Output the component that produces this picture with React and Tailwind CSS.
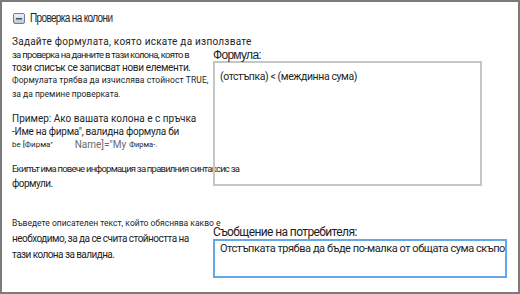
export default function App() {
  const f = { fontFamily: 'Roboto, "Noto Sans", sans-serif' };
  const t = { fontFamily: '"Liberation Sans", Arial, sans-serif' };
  return (
    <div className="w-[520px] h-[294px] bg-white border-2 border-[#7b7b7b] text-[#1e1e1e] overflow-hidden" style={f}>
      <div className="flex items-center h-[31px] pl-[11px] pt-[1px]">
        <svg width="12" height="11" viewBox="0 0 12 11" className="mr-[5px] shrink-0">
          <defs>
            <linearGradient id="g" x1="0" y1="0" x2="0" y2="1">
              <stop offset="0" stopColor="#f4f6fa" />
              <stop offset="1" stopColor="#b9c3d3" />
            </linearGradient>
          </defs>
          <rect x="0.5" y="0.5" width="11" height="10" rx="1.5" fill="url(#g)" stroke="#6f7f97" />
          <rect x="3" y="5" width="6" height="1.5" fill="#3c4d66" />
        </svg>
        <span className="inline-block origin-left scale-x-[0.8] text-[12.5px] leading-none tracking-[-0.8px] whitespace-nowrap" style={t}>Проверка на колони</span>
      </div>
      <div className="flex h-[181px]">
        <div className="w-[211px] pl-[10px] pt-[2px] text-[10px] whitespace-nowrap">
          <div className="h-[13px] leading-[13px] tracking-[0.25px]">Задайте формулата, която искате да използвате</div>
          <div className="h-[13px] leading-[13px] text-[9.5px] tracking-[-0.7px]">за проверка на данните в тази колона, която в</div>
          <div className="h-[13px] leading-[13px] tracking-[-0.35px]">този списък се записват нови елементи.</div>
          <div className="h-[13px] leading-[13px] text-[8.5px] tracking-[0.07px]">Формулата трябва да изчислява стойност TRUE,</div>
          <div className="h-[15px] leading-[15px] text-[8.5px]">за да премине проверката.</div>
          <div className="h-[11px]" />
          <div className="h-[12px] leading-[12px]">Пример: Ако вашата колона е с пръчка</div>
          <div className="h-[13px] leading-[13px] tracking-[-0.25px]">-Име на фирма", валидна формула би</div>
          <div className="h-[13px] leading-[13px] flex items-center">
            <span className="text-[8px]">be [Фирма"</span>
            <span className="ml-[22px] text-[#6a6a6a]">Name]="My</span>
            <span className="ml-[3px] text-[7.5px]">Фирма-.</span>
          </div>
          <div className="h-[10px]" />
          <div className="h-[15px] leading-[15px] text-[9.5px] tracking-[-0.78px]">Екипът има повече информация за правилния синтаксис за</div>
          <div className="h-[15px] leading-[15px] tracking-[-0.5px]">формули.</div>
        </div>
        <div className="pt-[15px]">
          <div className="h-[13px] text-[12px] leading-[15px] tracking-[-0.7px]" style={t}>Формула:</div>
          <div className="w-[269px] h-[125px] border-2 border-[#c6c6c6] px-[5px] pt-[7px] text-[10.5px] leading-[14px] tracking-[-0.4px]">
            (отстъпка) &lt; (междинна сума)
          </div>
        </div>
      </div>
      <div className="flex">
        <div className="w-[211px] pl-[10px] pt-[2px] whitespace-nowrap">
          <div className="h-[15px] leading-[15px] text-[8.5px]">Въведете описателен текст, който обяснява какво е</div>
          <div className="h-[16px] leading-[16px] text-[10px] tracking-[-0.52px]">необходимо, за да се счита стойността на</div>
          <div className="h-[16px] leading-[16px] text-[10px] tracking-[-0.56px]">тази колона за валидна.</div>
        </div>
        <div className="pt-[11px]">
          <div className="text-[12px] leading-[14px] tracking-[-0.6px]">Съобщение на потребителя:</div>
          <div className="w-[294px] h-[39px] border-2 border-[#62a9e8] pl-[5px] pt-[1px] text-[11px] leading-[14px] tracking-[-0.45px] whitespace-nowrap overflow-hidden">
            Отстъпката трябва да бъде по-малка от общата сума скъпо
          </div>
        </div>
      </div>
    </div>
  );
}
